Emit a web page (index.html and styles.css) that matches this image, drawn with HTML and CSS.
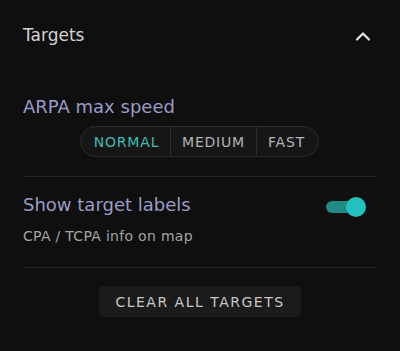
FILE: index.html
```html
<!DOCTYPE html>
<html>
<head>
<meta charset="utf-8">
<link rel="stylesheet" href="styles.css">
</head>
<body>
<div class="panel">
  <div class="header">
    <span class="title">Targets</span>
    <svg class="chevron" width="16" height="12" viewBox="0 0 16 12"><path d="M2 9.5 L8 3.5 L14 9.5" fill="none" stroke="#e6e6e6" stroke-width="2.2" stroke-linecap="round" stroke-linejoin="round"/></svg>
  </div>
  <div class="section speed">
    <div class="label">ARPA max speed</div>
    <div class="seg-wrap">
      <div class="seg">
        <span class="opt normal active">NORMAL</span>
        <span class="opt medium">MEDIUM</span>
        <span class="opt fast">FAST</span>
      </div>
    </div>
  </div>
  <div class="divider"></div>
  <div class="section labels">
    <div class="row">
      <div class="label">Show target labels</div>
      <div class="toggle"><div class="knob"></div></div>
    </div>
    <div class="sub">CPA / TCPA info on map</div>
  </div>
  <div class="divider"></div>
  <div class="actions">
    <button class="clear">CLEAR ALL TARGETS</button>
  </div>
</div>
</body>
</html>
```
FILE: styles.css
```css
html, body {
  margin: 0;
  padding: 0;
  background: #0f0f10;
  font-family: "DejaVu Sans", sans-serif;
}
.panel {
  padding: 0 23px;
  width: 354px;
}
.header {
  height: 70px;
  display: flex;
  align-items: center;
  justify-content: space-between;
}
.title {
  font-size: 17px;
  color: #d4d4d4;
}
.chevron {
  margin-right: 6px;
  margin-top: 2px;
}
.section.speed {
  padding-top: 25px;
  padding-bottom: 19px;
}
.label {
  font-size: 18px;
  line-height: 24px;
  color: #9a9cc6;
}
.seg-wrap {
  margin-top: 7px;
  display: flex;
  justify-content: flex-start;
  padding-left: 57px;
}
.seg {
  display: flex;
  height: 29px;
  border: 1px solid #2c2c2c;
  border-radius: 16px;
  background: #161616;
  overflow: hidden;
}
.opt {
  display: flex;
  align-items: center;
  justify-content: center;
  box-sizing: border-box;
  font-size: 14px;
  letter-spacing: 0.8px;
  color: #b4b4b4;
  border-left: 1px solid #2c2c2c;
}
.opt.normal {
  border-left: none;
  width: 89px;
  padding-left: 2px;
}
.opt.medium {
  width: 86px;
}
.opt.fast {
  width: 62px;
  padding-right: 2px;
}
.opt.active {
  color: #3cbdb6;
}
.divider {
  height: 1px;
  background: #262626;
}
.section.labels {
  padding-top: 16px;
  padding-bottom: 22px;
}
.row {
  display: flex;
  align-items: center;
  justify-content: space-between;
}
.toggle {
  position: relative;
  width: 34px;
  height: 12px;
  border-radius: 6px;
  background: #1f8a86;
  margin-right: 17px;
  margin-top: 3px;
}
.knob {
  position: absolute;
  right: -6px;
  top: -4px;
  width: 20px;
  height: 20px;
  border-radius: 50%;
  background: #22c1be;
}
.sub {
  margin-top: 10px;
  font-size: 14px;
  letter-spacing: 0.3px;
  line-height: 18px;
  color: #a4a4a4;
}
.actions {
  display: flex;
  justify-content: center;
  padding-top: 18px;
}
.clear {
  font-family: "DejaVu Sans", sans-serif;
  font-size: 14px;
  letter-spacing: 1.5px;
  color: #c8c8c8;
  background: #1b1b1b;
  border: none;
  border-radius: 4px;
  width: 202px;
  height: 31px;
  padding: 0;
}
```
